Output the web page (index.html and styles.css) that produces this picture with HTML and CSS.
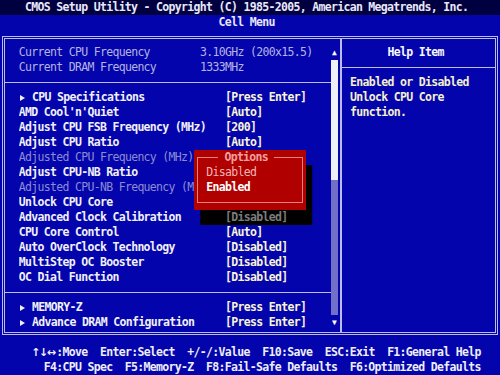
FILE: index.html
```html
<!DOCTYPE html>
<html lang="en">
<head>
    <meta charset="UTF-8">
    <meta name="viewport" content="width=device-width, initial-scale=1.0">
    <title>CMOS Setup Utility - Cell Menu</title>
    <link rel="stylesheet" href="styles.css">
</head>
<body>
    <div class="screen">
        <div class="title">    CMOS Setup Utility - Copyright (C) 1985-2005, American Megatrends, Inc.</div>
        <div class="subtitle">                                   Cell Menu</div>

        <div class="frame">
            <div class="left">
                <div class="list">
                    <div class="row info"><span>Current CPU Frequency</span><span>3.10GHz (200x15.5)</span></div>
                    <div class="row info"><span>Current DRAM Frequency</span><span>1333MHz</span></div>
                    <div class="rule"></div>
                    <div class="row"><span><i class="tri"></i>CPU Specifications</span><span class="val">[Press Enter]</span></div>
                    <div class="row"><span>AMD Cool'n'Quiet</span><span class="val">[Auto]</span></div>
                    <div class="row"><span>Adjust CPU FSB Frequency (MHz)</span><span class="val">[200]</span></div>
                    <div class="row"><span>Adjust CPU Ratio</span><span class="val">[Auto]</span></div>
                    <div class="row off"><span>Adjusted CPU Frequency (MHz)</span></div>
                    <div class="row"><span>Adjust CPU-NB Ratio</span></div>
                    <div class="row off"><span>Adjusted CPU-NB Frequency (M</span></div>
                    <div class="row"><span>Unlock CPU Core</span></div>
                    <div class="row"><span>Advanced Clock Calibration</span><span class="val shaded">[Disabled]</span></div>
                    <div class="row"><span>CPU Core Control</span><span class="val">[Auto]</span></div>
                    <div class="row"><span>Auto OverClock Technology</span><span class="val">[Disabled]</span></div>
                    <div class="row"><span>MultiStep OC Booster</span><span class="val">[Disabled]</span></div>
                    <div class="row"><span>OC Dial Function</span><span class="val">[Disabled]</span></div>
                    <div class="rule"></div>
                    <div class="row"><span><i class="tri"></i>MEMORY-Z</span><span class="val">[Press Enter]</span></div>
                    <div class="row"><span><i class="tri"></i>Advance DRAM Configuration</span><span class="val">[Press Enter]</span></div>
                </div>
                <div class="scroll">
                    <div class="arrow">▲</div>
                    <div class="thumb"></div>
                    <div class="track"></div>
                    <div class="arrow">▼</div>
                </div>
            </div>
            <div class="help">
                <div class="help-head">Help Item</div>
                <div class="help-rule"></div>
                <div class="help-text">Enabled or Disabled
Unlock CPU Core
function.</div>
            </div>
        </div>

        <div class="keys">
            <div class="key-line">     <span class="keyarrows">↑↓↔</span>:Move  Enter:Select  +/-/:Value  F10:Save  ESC:Exit  F1:General Help</div>
            <div class="key-line">       F4:CPU Spec  F5:Memory-Z  F8:Fail-Safe Defaults  F6:Optimized Defaults</div>
        </div>

        <div class="popup">
            <div class="popup-title">Options</div>
            <div class="popup-item">Disabled</div>
            <div class="popup-item selected">Enabled</div>
        </div>
    </div>
</body>
</html>
```

FILE: styles.css
```css
body {
    margin: 0;
    background: #000;
}
.screen {
    position: relative;
    width: 500px;
    height: 375px;
    overflow: hidden;
    background: #0404ac;
    font-family: "DejaVu Sans Mono", "Liberation Mono", monospace;
    font-size: 11.5px;
    font-weight: bold;
    letter-spacing: -0.68px;
    line-height: 15px;
    color: #f0f0f8;
}
.title, .subtitle, .row span, .help-text, .key-line, .popup-title, .popup-item {
    white-space: pre;
}
.title {
    height: 15px;
    background: #000040;
    color: #e8e8f8;
}
.subtitle {
    height: 15px;
    color: #e8e8f8;
}
.frame {
    display: flex;
    height: 293px;
    margin: 6px 2px 0 2px;
    border: 3px double #bcbcec;
}
.left {
    display: flex;
    width: 335px;
    padding: 6px 0 2px 13.75px;
    box-sizing: border-box;
}
.list {
    width: 312.5px;
}
.row {
    display: grid;
    grid-template-columns: 206.25px 1fr;
    height: 15px;
    overflow: hidden;
}
.row.info {
    grid-template-columns: 181.25px 1fr;
    color: #b4b4e4;
    font-weight: normal;
}
.row.off {
    color: #8c8cd4;
    font-weight: normal;
}
.tri {
    display: inline-block;
    width: 0;
    height: 0;
    margin: 0 7.25px 0 1px;
    border-left: 5px solid #f0f0f8;
    border-top: 3.5px solid transparent;
    border-bottom: 3.5px solid transparent;
    vertical-align: 0;
}
.val {
    color: #f8f4d8;
}
.shaded {
    position: relative;
    z-index: 3;
    color: #7c7c7c;
}
.rule {
    height: 1px;
    margin: 7px 0 7px -13.75px;
    background: #bcbcec;
}
.scroll {
    display: flex;
    flex-direction: column;
    width: 6.25px;
}
.arrow {
    height: 15px;
    font-size: 8px;
    text-align: center;
    letter-spacing: 0;
    color: #f8f8ff;
}
.thumb {
    height: 120px;
    background: #f0f0f8;
}
.track {
    height: 135px;
    background: #7070c8;
}
.help {
    flex: 1;
    padding-top: 6px;
    border-left: 2px solid #bcbcec;
}
.help-head {
    height: 15px;
    padding-left: 45.5px;
    color: #f8f8ff;
}
.help-rule {
    height: 1px;
    margin: 7px 0;
    background: #bcbcec;
}
.help-text {
    padding-left: 8px;
    color: #f4f0d0;
}
.keys {
    margin-top: 10px;
    color: #eeeef8;
}
.key-line {
    height: 15px;
}
.keyarrows {
    display: inline-block;
    width: 25px;
    font-family: "DejaVu Sans", sans-serif;
    font-size: 11px;
    letter-spacing: -1.5px;
    vertical-align: top;
}
.popup {
    position: absolute;
    left: 193.75px;
    top: 150px;
    z-index: 2;
    width: 112.5px;
    height: 60px;
    padding-left: 12.5px;
    box-sizing: border-box;
    background: #b00000;
    box-shadow: 6.25px 15px 0 #000;
}
.popup::before {
    content: "";
    position: absolute;
    left: 3px;
    right: 3px;
    top: 7px;
    bottom: 7px;
    border: 1px solid #e88080;
}
.popup-title {
    position: relative;
    width: 56px;
    height: 15px;
    margin-left: 12px;
    text-align: center;
    background: #b00000;
    color: #f0a0a0;
}
.popup-item {
    position: relative;
    height: 15px;
    color: #f4b4b4;
    font-weight: normal;
}
.popup-item.selected {
    color: #ffffff;
    font-weight: bold;
}
```
